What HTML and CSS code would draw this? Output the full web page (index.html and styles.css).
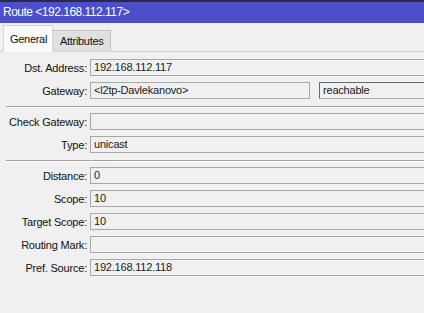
FILE: index.html
```html
<!DOCTYPE html>
<html>
<head>
<meta charset="utf-8">
<link rel="stylesheet" href="styles.css">
</head>
<body>
<div class="window">
  <div class="edge"></div>
  <div class="titlebar">Route &lt;192.168.112.117&gt;</div>
  <div class="tabs">
    <div class="tab active">General</div>
    <div class="tab">Attributes</div>
  </div>
  <div class="content">
    <div class="row">
      <div class="label">Dst. Address:</div>
      <div class="field">192.168.112.117</div>
    </div>
    <div class="row">
      <div class="label">Gateway:</div>
      <div class="field gw">&lt;l2tp-Davlekanovo&gt;</div>
      <div class="field state">reachable</div>
    </div>
    <div class="sep"></div>
    <div class="row">
      <div class="label">Check Gateway:</div>
      <div class="field"></div>
    </div>
    <div class="row">
      <div class="label">Type:</div>
      <div class="field">unicast</div>
    </div>
    <div class="sep"></div>
    <div class="row">
      <div class="label">Distance:</div>
      <div class="field">0</div>
    </div>
    <div class="row">
      <div class="label">Scope:</div>
      <div class="field">10</div>
    </div>
    <div class="row">
      <div class="label">Target Scope:</div>
      <div class="field">10</div>
    </div>
    <div class="row">
      <div class="label">Routing Mark:</div>
      <div class="field"></div>
    </div>
    <div class="row">
      <div class="label">Pref. Source:</div>
      <div class="field">192.168.112.118</div>
    </div>
  </div>
</div>
</body>
</html>
```
FILE: styles.css
```css
html, body {
  margin: 0;
  padding: 0;
  background: #f0f0f0;
  overflow: hidden;
}
body {
  width: 424px;
  height: 313px;
  font-family: "Liberation Sans", Arial, sans-serif;
  font-size: 11px;
  color: #111111;
}
.window {
  width: 424px;
  overflow: hidden;
}
.edge {
  height: 2px;
  background: #2a2a40;
}
.titlebar {
  height: 21px;
  line-height: 21px;
  background: #4b4fc9;
  color: #ffffff;
  font-size: 12px;
  padding-left: 3px;
  letter-spacing: -0.5px;
}
.tabs {
  display: flex;
  align-items: flex-end;
  box-sizing: border-box;
  height: 29px;
  padding-left: 3px;
  border-bottom: 1px solid #d2d2d2;
}
.tab {
  box-sizing: border-box;
  height: 21px;
  padding: 0 7px;
  line-height: 20px;
  background: #e0e0e0;
  border: 1px solid #c4c4c4;
  border-bottom: none;
  border-left: none;
  letter-spacing: -0.3px;
}
.tab.active {
  width: 50px;
  height: 27px;
  line-height: 26px;
  padding: 0 6px;
  background: #fafafa;
  border: 1px solid #d6d6d6;
  border-bottom: none;
  margin-bottom: -1px;
}
.content {
  display: flex;
  flex-direction: column;
  padding-top: 7px;
  margin-right: -30px;
}
.row {
  display: flex;
  align-items: center;
  height: 17px;
  margin-bottom: 6px;
}
.label {
  width: 87px;
  text-align: right;
  padding-right: 3px;
  white-space: nowrap;
  letter-spacing: -0.2px;
}
.field {
  box-sizing: border-box;
  height: 17px;
  line-height: 15px;
  flex: 1;
  border: 1px solid #a8a8a8;
  background: #f0f0f0;
  padding-left: 3px;
  color: #1a1a1a;
  letter-spacing: -0.2px;
}
.field.gw {
  flex: 0 0 220px;
}
.field.state {
  margin-left: 9px;
  border-top-color: #6b6b6b;
  border-left-color: #6b6b6b;
}
.sep {
  height: 0;
  margin: 1px 0 5px 6px;
  border-top: 1px solid #a0a0a0;
  border-bottom: 1px solid #ffffff;
}
```
